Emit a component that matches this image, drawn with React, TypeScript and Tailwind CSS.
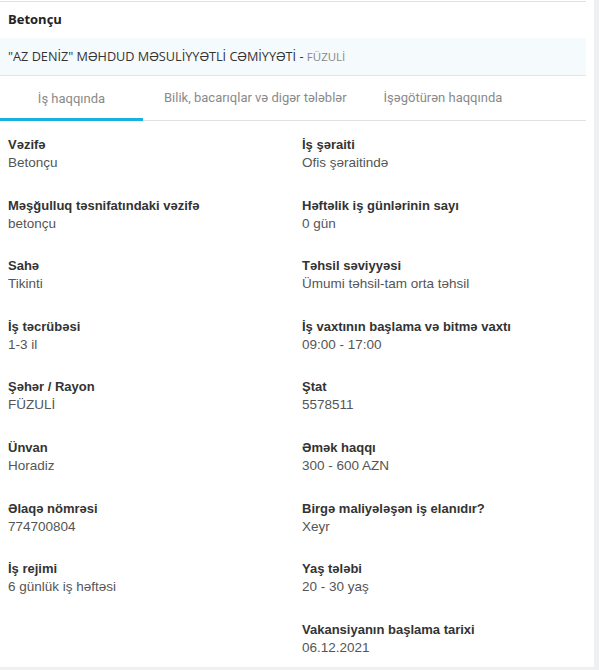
import React from 'react';

const fields: { label: string; value: string }[] = [
  { label: 'Vəzifə', value: 'Betonçu' },
  { label: 'İş şəraiti', value: 'Ofis şəraitində' },
  { label: 'Məşğulluq təsnifatındaki vəzifə', value: 'betonçu' },
  { label: 'Həftəlik iş günlərinin sayı', value: '0 gün' },
  { label: 'Sahə', value: 'Tikinti' },
  { label: 'Təhsil səviyyəsi', value: 'Ümumi təhsil-tam orta təhsil' },
  { label: 'İş təcrübəsi', value: '1-3 il' },
  { label: 'İş vaxtının başlama və bitmə vaxtı', value: '09:00 - 17:00' },
  { label: 'Şəhər / Rayon', value: 'FÜZULİ' },
  { label: 'Ştat', value: '5578511' },
  { label: 'Ünvan', value: 'Horadiz' },
  { label: 'Əmək haqqı', value: '300 - 600 AZN' },
  { label: 'Əlaqə nömrəsi', value: '774700804' },
  { label: 'Birgə maliyələşən iş elanıdır?', value: 'Xeyr' },
  { label: 'İş rejimi', value: '6 günlük iş həftəsi' },
  { label: 'Yaş tələbi', value: '20 - 30 yaş' },
  { label: '', value: '' },
  { label: 'Vakansiyanın başlama tarixi', value: '06.12.2021' },
];

export default function App() {
  return (
    <div className="h-[670px] w-[599px] bg-[#eef0f2]">
      <div className="h-[667px] w-[594px] bg-white">
        <div className="w-[586px] pt-px">
          {/* header */}
          <div className="border-t border-[#cfe5ee] h-[37px] flex items-center px-2 font-['Open_Sans',sans-serif] text-[13px] font-bold text-[#222]">
            Betonçu
          </div>
          <div className="h-[38px] bg-[#f5fafd] border-b border-[#e3e6e8] flex items-center px-2 font-['Open_Sans',sans-serif] text-[12.7px] text-[#333]">
            "AZ DENİZ" MƏHDUD MƏSULİYYƏTLİ CƏMİYYƏTİ -&nbsp;<span className="text-[#888] text-[11.5px]">FÜZULİ</span>
          </div>

          {/* tabs */}
          <div className="flex h-[45px] border-b border-[#e0e0e0] font-['Roboto',sans-serif] text-[13px] text-[#8a8a8a]">
            <div className="w-[143px] flex items-center justify-center border-b-[3px] border-[#1ab0e0] -mb-px pt-[3px]">
              İş haqqında
            </div>
            <div className="ml-[21px] flex items-center">Bilik, bacarıqlar və digər tələblər</div>
            <div className="ml-[37px] flex items-center">İşəgötürən haqqında</div>
          </div>

          {/* fields */}
          <div className="grid grid-cols-[294px_1fr] gap-y-[24.6px] pt-[15px] pl-2 font-['Liberation_Sans',Arial,sans-serif] text-[13px] leading-[18px]">
            {fields.map((f, i) => (
              <div key={i} className="flex flex-col">
                <span className="font-bold text-[#333]">{f.label}</span>
                <span className="text-[#555] text-[13.5px]">{f.value}</span>
              </div>
            ))}
          </div>
        </div>
      </div>
    </div>
  );
}
